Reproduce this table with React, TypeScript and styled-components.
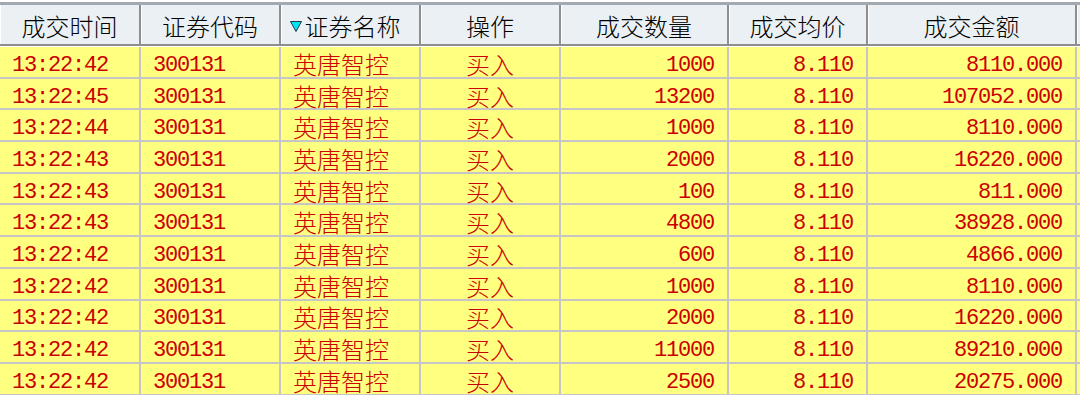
import styled, { createGlobalStyle } from "styled-components";

const GlobalStyle = createGlobalStyle`
    html, body {
        margin: 0;
        padding: 0;
        background: #ffffff;
        overflow: hidden;
    }
`;

type Align = "left" | "center" | "right";

interface Column {
    title: string;
    align: Align;
    sorted?: boolean;
}

const columns: Column[] = [
    { title: "成交时间", align: "left" },
    { title: "证券代码", align: "left" },
    { title: "证券名称", align: "left", sorted: true },
    { title: "操作", align: "center" },
    { title: "成交数量", align: "right" },
    { title: "成交均价", align: "right" },
    { title: "成交金额", align: "right" },
];

const trades = [
    { time: "13:22:42", qty: "1000", amount: "8110.000" },
    { time: "13:22:45", qty: "13200", amount: "107052.000" },
    { time: "13:22:44", qty: "1000", amount: "8110.000" },
    { time: "13:22:43", qty: "2000", amount: "16220.000" },
    { time: "13:22:43", qty: "100", amount: "811.000" },
    { time: "13:22:43", qty: "4800", amount: "38928.000" },
    { time: "13:22:42", qty: "600", amount: "4866.000" },
    { time: "13:22:42", qty: "1000", amount: "8110.000" },
    { time: "13:22:42", qty: "2000", amount: "16220.000" },
    { time: "13:22:42", qty: "11000", amount: "89210.000" },
    { time: "13:22:42", qty: "2500", amount: "20275.000" },
];

const GRID = "141px 140px 140px 140px 168px 139px 209px 1fr";

const Table = styled.div`
    padding-top: 2px;
    width: 1080px;
`;

const HeaderRow = styled.div`
    display: grid;
    grid-template-columns: ${GRID};
    height: 44px;
    box-sizing: border-box;
    border-top: 3px solid #a2a9b0;
    border-bottom: 2px solid #8e8e8e;
    background: #eaf0f4;
    margin-bottom: 1px;
`;

const HeaderCell = styled.div<{ $shift?: boolean }>`
    display: flex;
    align-items: center;
    justify-content: center;
    gap: 3px;
    border-right: 2px solid #8e8e8e;
    box-shadow: inset 1px 0 0 #ffffff;
    font-family: "Noto Sans CJK SC", sans-serif;
    font-weight: 300;
    font-size: 24px;
    color: #000000;
    padding-top: 1px;
    padding-right: ${(p) => (p.$shift ? "10px" : "0")};

    &:last-child {
        border-right: none;
    }
`;

const SortMark = styled.svg`
    width: 12px;
    height: 11px;
    margin-top: 2px;
`;

const Body = styled.div`
    display: grid;
    grid-template-columns: ${GRID};
    grid-auto-rows: 31.7px;
    background: #ffff80;
`;

const Cell = styled.div<{ $align: Align; $mono?: boolean }>`
    display: flex;
    align-items: center;
    justify-content: ${(p) =>
        p.$align === "left" ? "flex-start" : p.$align === "right" ? "flex-end" : "center"};
    padding: ${(p) => (p.$mono ? "7px" : "3px")} ${(p) => (p.$align === "right" ? "13px" : "0")} 0
        ${(p) => (p.$align === "left" ? "12px" : "0")};
    box-sizing: border-box;
    border-right: 2px solid #c6c6c6;
    border-bottom: 2px solid #c6c6c6;
    color: #cc0000;
    white-space: nowrap;
    font-family: ${(p) =>
        p.$mono ? `"Liberation Mono", "DejaVu Sans Mono", monospace` : `"Noto Sans CJK SC", sans-serif`};
    font-weight: ${(p) => (p.$mono ? 400 : 300)};
    font-size: ${(p) => (p.$mono ? "22px" : "24px")};
    letter-spacing: ${(p) => (p.$mono ? "-1.2px" : "0")};

    &:nth-child(8n) {
        border-right: none;
    }
`;

export default function App() {
    return (
        <>
            <GlobalStyle />
            <Table>
                <HeaderRow>
                    {columns.map((c) => (
                        <HeaderCell key={c.title} $shift={c.sorted}>
                            {c.sorted && (
                                <SortMark viewBox="0 0 12 11">
                                    <polygon points="0.5,0.5 11.5,0.5 6,10.5" fill="#00e4f4" stroke="#1a3a44" strokeWidth="1" />
                                </SortMark>
                            )}
                            {c.title}
                        </HeaderCell>
                    ))}
                    <HeaderCell />
                </HeaderRow>
                <Body>
                    {trades.map((t, i) => [
                        <Cell key={`t${i}`} $align="left" $mono>{t.time}</Cell>,
                        <Cell key={`c${i}`} $align="left" $mono>300131</Cell>,
                        <Cell key={`n${i}`} $align="left">英唐智控</Cell>,
                        <Cell key={`o${i}`} $align="center">买入</Cell>,
                        <Cell key={`q${i}`} $align="right" $mono>{t.qty}</Cell>,
                        <Cell key={`p${i}`} $align="right" $mono>8.110</Cell>,
                        <Cell key={`a${i}`} $align="right" $mono>{t.amount}</Cell>,
                        <Cell key={`e${i}`} $align="left" />,
                    ])}
                </Body>
            </Table>
        </>
    );
}
